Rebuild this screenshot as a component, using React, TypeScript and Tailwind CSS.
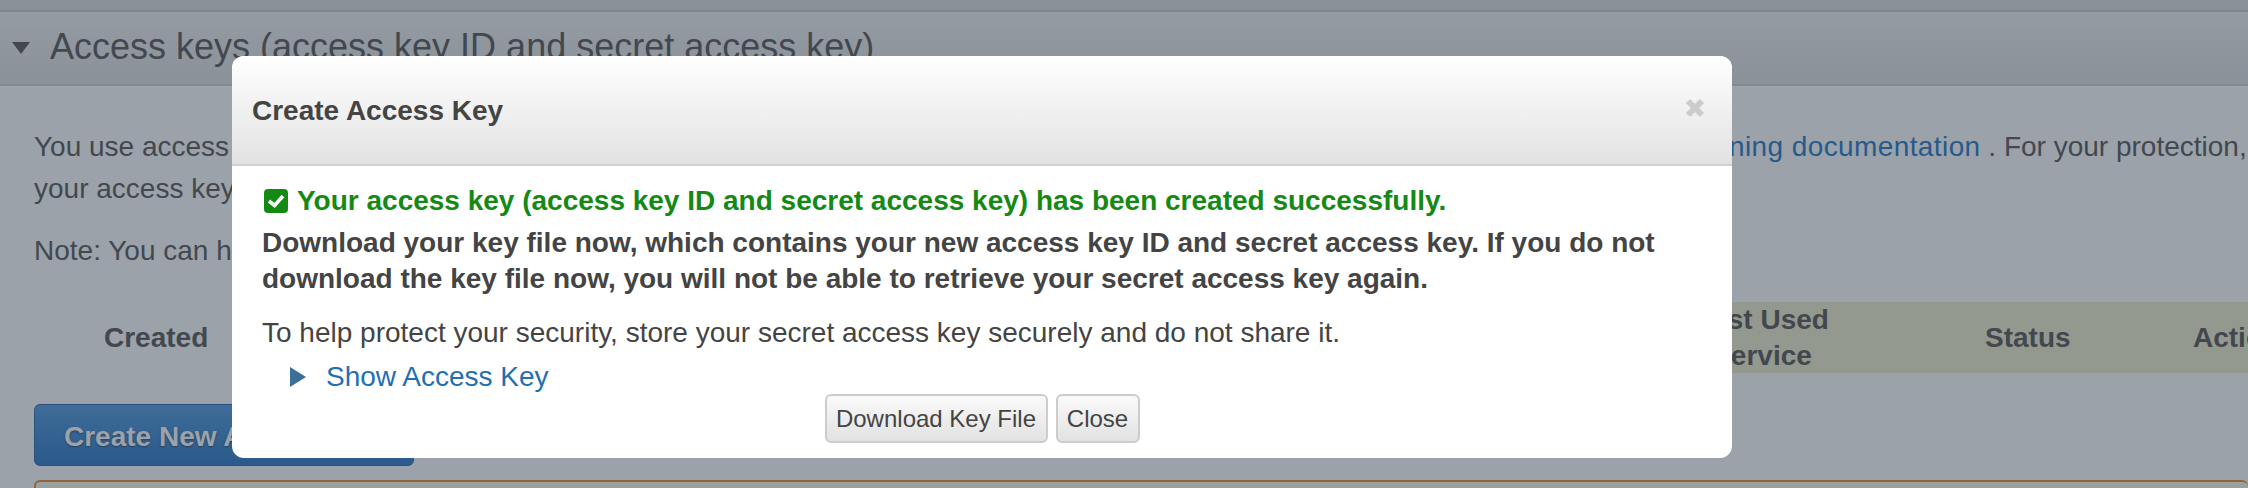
import React from "react";

const sans = "font-['Liberation_Sans',Arial,sans-serif]";

function CheckBadge() {
  return (
    <svg viewBox="0 0 24 24" className="w-[24px] h-[24px] shrink-0">
      <rect width="24" height="24" rx="4" fill="#148a14" />
      <path d="M5 12 L10.5 16.5 L19 7" fill="none" stroke="#fff" strokeWidth="3.6" />
    </svg>
  );
}

export default function App() {
  return (
    <div className={`relative w-[2248px] h-[488px] overflow-hidden bg-[#9ba2a9] text-[#43484e] ${sans}`}>
      {/* page behind the dialog */}
      <div className="h-[10px] bg-[#8b9199]" />
      <div className="h-[2px] bg-[#7f868e]" />
      <div className="h-[74px] border-b-2 border-[#838a92] bg-gradient-to-b from-[#949ba3] to-[#8b9199] flex items-center pl-[12px]">
        <span className="w-0 h-0 border-x-[9px] border-x-transparent border-t-[12px] border-t-[#43484e]" />
        <h2 className="ml-[20px] text-[36px] leading-[44px] -mt-[3px] whitespace-nowrap">
          Access keys (access key ID and secret access key)
        </h2>
      </div>

      <div className="pl-[34px]">
        <p className="mt-[40px] text-[28px] leading-[42px] whitespace-nowrap">
          <span className="inline-block w-[1658px]">
            You use access keys to sign programmatic requests to AWS services. For more information, see the
          </span>
          <a className="text-[#265a8c] tracking-[0.4px]">signing documentation</a> . For your protection,
          <br />
          your access keys securely and do not share them.
        </p>
        <p className="mt-[20px] text-[28px] leading-[42px] whitespace-nowrap">
          Note: You can have a maximum of two access keys (active or inactive) at a time.
        </p>

        <div className="mt-[30px] h-[71px] w-[2214px] flex items-center text-[28px] leading-[36px] font-bold">
          <div className="w-[198px] shrink-0 h-full flex items-center pl-[70px]">Created</div>
          <div className="flex-1 min-w-0 h-full bg-[#94998f] flex items-center whitespace-nowrap">
            <div className="ml-[1425px] w-[210px] shrink-0 text-center">
              Last Used
              <br />
              Service
            </div>
            <div className="ml-[118px] w-[208px] shrink-0">Status</div>
            <div className="shrink-0">Actions</div>
          </div>
        </div>

        <button className="mt-[31px] block w-[380px] h-[62px] rounded-[6px] border border-[#28527f] bg-gradient-to-b from-[#3f6c98] to-[#2a5a8b] text-left pl-[29px] pt-[3px] text-[28px] font-bold text-[#9ba2a9] [text-shadow:0_1px_2px_#2a3f55]">
          Create New Access Key
        </button>

        <div className="mt-[14px] h-[40px] rounded-t-[6px] border-t-2 border-l-2 border-[#94633c] bg-[#9ba29e]" />
      </div>

      {/* dialog */}
      <div className="absolute left-[232px] top-[56px] w-[1500px] h-[402px] rounded-[12px] bg-white overflow-hidden flex flex-col">
        <div className="h-[110px] shrink-0 border-b-2 border-[#cfcfcf] bg-gradient-to-b from-white to-[#e2e2e2] flex items-center justify-between pl-[20px] pr-[27px]">
          <h3 className="mt-[2px] text-[28px] leading-[34px] font-bold text-[#444]">Create Access Key</h3>
          <svg viewBox="0 0 20 20" className="w-[20px] h-[20px] -mt-[4px]">
            <path d="M3 3 L17 17 M17 3 L3 17" stroke="#cccccc" strokeWidth="6" />
          </svg>
        </div>

        <div className="flex-1 pl-[30px] pr-[40px] pt-[20px] relative">
          <div className="flex items-center gap-[9px] pl-[2px] text-[28px] leading-[30px] font-bold text-[#148a14]">
            <CheckBadge />
            <span>Your access key (access key ID and secret access key) has been created successfully.</span>
          </div>
          <p className="mt-[9px] text-[28px] leading-[36px] font-bold text-[#444] whitespace-nowrap">
            Download your key file now, which contains your new access key ID and secret access key. If you do not
            <br />
            download the key file now, you will not be able to retrieve your secret access key again.
          </p>
          <p className="mt-[18px] text-[28px] leading-[36px] text-[#444]">
            To help protect your security, store your secret access key securely and do not share it.
          </p>
          <div className="mt-[10px] ml-[28px] flex items-center gap-[20px] text-[28px] leading-[32px] text-[#1f6fb2]">
            <span className="w-0 h-0 border-y-[10px] border-y-transparent border-l-[16px] border-l-[#3a6f9a]" />
            <a>Show Access Key</a>
          </div>
          <div className="mt-[1px] flex justify-center gap-[8px] -ml-[30px] -mr-[40px]">
            <button className="h-[49px] w-[223px] rounded-[6px] border-2 border-[#cccccc] bg-gradient-to-b from-[#fafafa] to-[#e2e2e2] text-[24px] text-[#444]">
              Download Key File
            </button>
            <button className="h-[49px] w-[84px] rounded-[6px] border-2 border-[#cccccc] bg-gradient-to-b from-[#fafafa] to-[#e2e2e2] text-[24px] text-[#444]">
              Close
            </button>
          </div>
        </div>
      </div>
    </div>
  );
}
